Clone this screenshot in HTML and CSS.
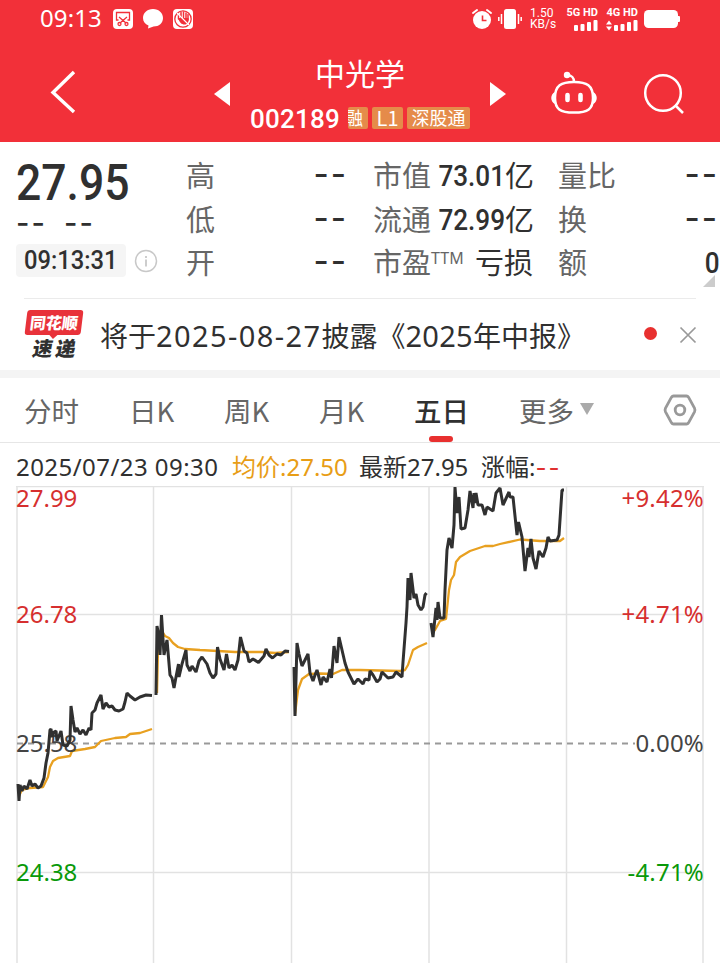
FILE: index.html
```html
<!DOCTYPE html>
<html lang="zh-CN">
<head>
  <meta charset="UTF-8" />
  <meta name="viewport" content="width=device-width, initial-scale=1.0" />
  <title>中光学 002189</title>
  <link rel="stylesheet" href="styles.css">
</head>
<body>
<header class="top">
  <div class="status">
    <span class="clock">09:13</span>
    <svg class="status-left" width="82" height="22" viewBox="112 7 82 22">
      <rect x="113" y="8" width="20" height="20" rx="4" fill="#fff"/>
      <g fill="none" stroke="#f23039" stroke-width="1.3">
        <path d="M118.500 19h-2v-7.500h13v7.500h-2M119 16l7 6M127 16l-7 6"/>
        <circle cx="119.500" cy="23" r="1.500"/><circle cx="126.500" cy="23" r="1.500"/>
      </g>
      <path d="M153 8c6 0 10 4 10 9s-4 8.500-9.500 8.500L148 27.500l.5-3c-3.500-1.500-5.500-4-5.500-7.500 0-5 4-9 10-9z" fill="#fff"/>
      <rect x="173" y="8" width="20" height="20" rx="4" fill="#fff"/>
      <circle cx="183" cy="18" r="8.200" fill="none" stroke="#f23039" stroke-width="1.300"/>
      <path d="M178.500 18v-4.500M181 17v-5.500M183.500 17v-6M186 17v-5M188 19v-5.500" stroke="#f23039" stroke-width="1.500" stroke-linecap="round"/>
      <path d="M178 17h10.500c.5 4-1 6.500-4 6.500s-5-2-6.500-6.500z" fill="#f23039"/>
      <path d="M177 12l12 12" stroke="#fff" stroke-width="1.100"/>
    </svg>
    <svg class="status-mid" width="52" height="24" viewBox="471 6 52 24">
      <circle cx="482" cy="19" r="9" fill="#fff"/>
      <path d="M473 12l4-3M491 12l-4-3" stroke="#fff" stroke-width="2" stroke-linecap="round"/>
      <path d="M482.500 14.500v5h4" fill="none" stroke="#f23039" stroke-width="1.600"/>
      <rect x="504" y="8" width="12" height="20" rx="2.500" fill="#fff"/>
      <path d="M501.500 13v10M498.800 16v4M518.500 13v10M521.200 16v4" stroke="#fff" stroke-width="1.500"/>
    </svg>
    <span class="speed">1.50<br>KB/s</span>
    <div class="sim">
      <span>5G HD</span>
      <svg width="24" height="11" viewBox="0 0 24 11" fill="#fff">
        <rect x="0" y="5" width="4" height="6" rx="1"/><rect x="6.500" y="4" width="4" height="7" rx="1"/><rect x="13" y="2" width="4" height="9" rx="1"/><rect x="19.500" y="0" width="4" height="11" rx="1"/>
      </svg>
    </div>
    <div class="sim">
      <span>4G HD</span>
      <svg width="32" height="11" viewBox="0 0 32 11" fill="#fff">
        <path d="M0 4.500L3 .5l3 4zM0 6.500l3 4 3-4z"/>
        <rect x="8" y="5" width="4" height="6" rx="1"/><rect x="14.500" y="4" width="4" height="7" rx="1"/><rect x="21" y="2" width="4" height="9" rx="1"/><rect x="27.500" y="0" width="4" height="11" rx="1"/>
      </svg>
    </div>
    <svg class="battery" width="36" height="18" viewBox="0 0 36 18" fill="#fff">
      <rect width="34" height="18" rx="4.500"/><rect x="33" y="6" width="3" height="6" rx="1"/>
    </svg>
  </div>
  <div class="nav">
    <svg class="back" width="30" height="46" viewBox="0 0 30 46"><path d="M26 3L5 23.500 26 43" fill="none" stroke="#fff" stroke-width="3.400"/></svg>
    <svg class="prev" width="16" height="24" viewBox="0 0 16 24"><path d="M16 0v24L0 12z" fill="#fff"/></svg>
    <div class="stock">
      <h1>中光学</h1>
      <div class="code-row">
        <span class="code">002189</span>
        <span class="tag tag-cut">融</span>
        <span class="tag tag-l1">L1</span>
        <span class="tag tag-sgt">深股通</span>
      </div>
    </div>
    <svg class="next" width="16" height="24" viewBox="0 0 16 24"><path d="M0 0v24L16 12z" fill="#fff"/></svg>
    <svg class="robot" width="48" height="44" viewBox="550 71 48 44">
      <g fill="none" stroke="#fff" stroke-width="2.500">
        <path d="M574 82c13 0 19 3.500 19 16 0 11-5 14.500-19 14.500S555 109 555 98c0-12.500 6-16 19-16z"/>
        <path d="M574 82c0-5-2-6.500-7-7"/>
      </g>
      <circle cx="567" cy="75" r="3.200" fill="#fff"/>
      <path d="M555 92c-5 2-5 10 0 12zM593 92c5 2 5 10 0 12z" fill="#fff"/>
      <path d="M567.500 95v5M580.500 95v5" stroke="#fff" stroke-width="4.600" stroke-linecap="round"/>
    </svg>
    <svg class="search" width="42" height="42" viewBox="643 73 42 42" fill="none" stroke="#fff" stroke-width="2.500">
      <circle cx="663" cy="93" r="17.800"/><path d="M675 105l8 8"/>
    </svg>
  </div>
</header>

<section class="quote">
  <div class="price-box">
    <div class="price"><span>27.95</span></div>
    <div class="change"><span>--</span><span>--</span></div>
    <div class="time-row">
      <span class="time"><span>09:13:31</span></span>
      <svg width="24" height="24" viewBox="0 0 24 24"><circle cx="12" cy="12" r="10.500" fill="none" stroke="#c8c8c8" stroke-width="1.500"/><path d="M12 7v2M12 10.500v7" stroke="#c8c8c8" stroke-width="1.800"/></svg>
    </div>
  </div>
  <dl class="stats stats-a">
    <div><dt>高</dt><dd class="dash">--</dd></div>
    <div><dt>低</dt><dd class="dash">--</dd></div>
    <div><dt>开</dt><dd class="dash">--</dd></div>
  </dl>
  <dl class="stats stats-b">
    <div><dt>市值</dt><dd><b>73.01</b>亿</dd></div>
    <div><dt>流通</dt><dd><b>72.99</b>亿</dd></div>
    <div><dt>市盈<sup>TTM</sup></dt><dd>亏损</dd></div>
  </dl>
  <dl class="stats stats-c">
    <div><dt>量比</dt><dd class="dash">--</dd></div>
    <div><dt>换</dt><dd class="dash">--</dd></div>
    <div><dt>额</dt><dd><b>0</b></dd></div>
  </dl>
  <i class="corner"></i>
</section>

<section class="news">
  <div class="logo">
    <span class="logo-top">同花顺</span>
    <span class="logo-bottom">速递</span>
  </div>
  <p>将于<span class="num date">2025-08-27</span>披露《<span class="num">2025</span>年中报》</p>
  <i class="dot"></i>
  <svg width="18" height="18" viewBox="0 0 18 18"><path d="M1.500 1.500l15 15M16.500 1.500l-15 15" stroke="#999" stroke-width="1.700"/></svg>
</section>

<nav class="tabs">
  <span>分时</span>
  <span>日K</span>
  <span>周K</span>
  <span>月K</span>
  <span class="active">五日</span>
  <span class="more">更多<i></i></span>
  <svg width="34" height="34" viewBox="0 0 34 34" fill="none" stroke="#999" stroke-width="2.800">
    <path d="M10.500 3h13c1 0 1.500.4 2 1.200l6 11c.6 1.200.6 2.400 0 3.600l-6 11c-.5.800-1 1.200-2 1.200h-13c-1 0-1.500-.4-2-1.200l-6-11c-.6-1.200-.6-2.400 0-3.600l6-11c.5-.8 1-1.200 2-1.200z"/>
    <circle cx="17" cy="17" r="4.800"/>
  </svg>
</nav>

<div class="legend">
  <span class="l-date">2025/07/23 09:30</span>
  <span class="l-avg">均价:27.50</span>
  <span class="l-last">最新27.95</span>
  <span class="l-rate">涨幅:<em>--</em></span>
</div>

<svg class="chart" width="720" height="477" viewBox="0 486 720 477">
  <g class="grid">
    <path d="M16 486.500H704M17 614.500H703M17 872.500H703"/>
    <path d="M17 486V963M153.500 486V963M291.500 486V963M429 486V963M566.500 486V963M703 486V963"/>
  </g>
  <path class="zero" d="M17 743.500H635"/>

  <g class="avg">
    <polyline points="19,796 22,790 30,788 43,787 48,777 50,767 53,761 58,758 70,756 72,751 85,749 95,747 101,741 115,738 126,737 130,734 140,733 152,729"/>
    <polyline points="157,693 158,650 161,630 165,636 169,638 173,643 178,647 185,649 200,650 218,651 235,652 262,652 275,653 289,652"/>
    <polyline points="295,714 298,690 302,679 309,674 320,673.500 333,674 342,670 360,670 400,671 405,670 408,665 413,650 418,647 427,643"/>
    <polyline points="432,633 435,630 440,621 446,619 449,590 451,580 454,575 456,562 460,557 470,551 485,546 493,546 500,544 520,539.500 540,541 560,541 564,538"/>
  </g>

  <g class="labels">
    <text class="up" x="16" y="507">27.99</text>
    <text class="up" x="16" y="623">26.78</text>
    <text x="16" y="752">25.58</text>
    <text class="down" x="16" y="881">24.38</text>
    <text class="up end" x="704" y="507">+9.42%</text>
    <text class="up end" x="704" y="623">+4.71%</text>
    <text class="end" x="704" y="752">0.00%</text>
    <text class="down end" x="704" y="881">-4.71%</text>
  </g>

  <g class="line">
    <polyline points="18,784 19,801 20,785 22,791 24,786 27,789 30,780 32,786 35,784 38,788 41,786 44,778 46,763 48,753 50,730 51,729 52,737 54,732 56,731 57,741 59,736 61,731 63,745 67,746 70,740 71,706 73,720 75,732 77,728 80,734 83,730 86,735 89,728 91,730 92,713 95,710 97,703 101,695 103,709 106,703 109,707 112,706 115,710 119,711 123,709 125,702 127,693 130,696 135,700 140,697 146,695 152,695.500"/>
    <polyline points="156,695 157,626 159,637 160,655 161.500,615 164,655 167,640 170,675 172,678 174,688 176,677 178.500,664 179,677 182,664 186,650 187,665 190,671 192,666 196,672 199,661 202,657 207,664 210,673 213,678 216,674 217.500,647 220,659 224,670 226.500,654 229,668 232,665 235,670 238,660 240.500,637 244,651 247,653 249,662 253,659 258.500,662.500 264,656 266,649 269,655 272.500,658 277,654 281,655 285,651 289,651.500"/>
    <polyline points="294,667 295,716 297,643 299,654 302,666 305,660 308,654 310,673 313,681 315,675 317,670 321,685 323,677 327,682 330,669 331.500,678 334,646 337,663 339,637 342,650 345,663 348,672 354,684 358,679 363,684 365,679 369,680 370,671 373,675 377,682 380,679 382,672 388,678 393,677 396,672 402,677 403,662 406,623 407,607 408,578 410,600 411,573 414,598 416,594 418,605 421,610 423,607 425,595 426.500,593"/>
    <polyline points="431,623 433,637 436,608 437,620 438,602 440,618 444,618 445,590 447,550 449,538 452,548 454,525 455,487 457,513 459,497 461,529 465,528 468,510 470,491 473,508 474,493 475,503 476,493 478,505 482,505 485,515 487,507 493,511 496,493 500,488 503,505 509,492 510,497 513,497 517,535 518.500,522 522,537 525,571 528,548 529,557 531,539 533,558 536,569 539,551 543,557 546,548 548,537 550,541 557,540 559,535 562,490 564,490"/>
  </g>
</svg>
</body>
</html>
```
FILE: styles.css
```css
* {
  box-sizing: border-box;
}
body {
  margin: 0;
  width: 720px;
  height: 963px;
  overflow: hidden;
  background: #fff;
  color: #303030;
  font-family: "Noto Sans", "Noto Sans CJK SC", sans-serif;
}
svg {
  display: block;
  flex: none;
}
i, em {
  font-style: normal;
}

/* red header */
.top {
  height: 142px;
  background: #f23039;
  color: #fff;
}
.status {
  display: flex;
  height: 37px;
  align-items: center;
  padding-left: 40px;
}
.clock {
  width: 72px;
  font-size: 24px;
  line-height: 34px;
  letter-spacing: 0.1px;
  margin-top: -2px;
}
.status-left {
  margin-right: 277px;
}
.speed {
  width: 42px;
  padding-left: 7px;
  font: 400 12px/11px Roboto, sans-serif;
}
.sim {
  width: 40px;
  display: flex;
  flex-direction: column;
  align-items: flex-end;
  padding-right: 7px;
  font: 700 11px/12px Roboto, sans-serif;
  white-space: nowrap;
}
.sim svg {
  margin-top: 1px;
}
.battery {
  margin-left: -1px;
}
.nav {
  display: flex;
  height: 105px;
}
.back {
  margin: 32px 0 0 48px;
}
.prev {
  margin: 45px 0 0 136px;
}
.stock {
  width: 260px;
  padding-left: 20px;
}
.stock h1 {
  width: 220px;
  margin: 15px 0 0;
  font: 400 30px/40px "Noto Sans CJK SC", sans-serif;
  text-align: center;
}
.code-row {
  display: flex;
  height: 22px;
  margin-top: 15px;
  align-items: center;
}
.code {
  width: 98px;
  font: 500 26px/24px Roboto, sans-serif;
  letter-spacing: 0.2px;
  padding-top: 1px;
}
.tag {
  height: 22px;
  margin-right: 4px;
  background: #e58b4a;
  border-radius: 2px;
  font: 400 18px/21px "Noto Sans CJK SC", sans-serif;
  text-align: center;
  white-space: nowrap;
}
.tag-cut {
  display: flex;
  width: 20px;
  justify-content: flex-end;
  padding-right: 5px;
  overflow: hidden;
}
.tag-l1 {
  width: 31px;
  font-size: 20px;
}
.tag-sgt {
  width: 63px;
  margin-right: 0;
}
.next {
  margin: 45px 0 0 0;
}
.robot {
  margin: 34px 0 0 44px;
}
.search {
  margin: 36px 0 0 45px;
}

/* quote */
.quote {
  position: relative;
  display: flex;
  height: 157px;
  padding: 11px 0 0 16px;
}
.quote::after {
  content: "";
  position: absolute;
  left: 24px;
  right: 24px;
  bottom: 0;
  height: 1px;
  background: #ebebeb;
}
.price-box {
  width: 170px;
}
.price {
  height: 61px;
  font: 500 50px/60px Roboto, sans-serif;
}
.price span {
  display: inline-block;
  transform: scaleX(0.89);
  transform-origin: left;
}
.change {
  display: flex;
  height: 18px;
  gap: 17px;
  font: 500 29px/18px Inter, sans-serif;
}
.change span {
  width: 31px;
  letter-spacing: 2px;
  white-space: nowrap;
}
.time-row {
  display: flex;
  align-items: center;
  gap: 8px;
  margin-top: 12px;
}
.time {
  width: 110px;
  height: 33px;
  padding-left: 8px;
  background: #f5f5f5;
  border-radius: 4px;
  font: 500 25px/33px Roboto, sans-serif;
}
.time span {
  display: inline-block;
  transform: scaleX(0.95);
  transform-origin: left;
}
.stats {
  margin: 0;
  flex: none;
}
.stats div {
  display: flex;
  height: 43.500px;
  justify-content: space-between;
  font: 400 29px/42px "Noto Sans CJK SC", sans-serif;
  white-space: nowrap;
}
.stats dt {
  color: #666;
}
.stats dd {
  margin: 0;
}
.stats b {
  display: inline-block;
  font: 500 29px/40px Roboto, sans-serif;
  transform: translateY(-1px) scaleX(0.9);
  transform-origin: right;
}
.stats sup {
  font: 400 16px/10px "Noto Sans", sans-serif;
  vertical-align: 10px;
}
.stats .dash {
  font-family: Inter, sans-serif;
  font-size: 33px;
  font-weight: 500;
  letter-spacing: 2px;
}
.stats-a {
  width: 162px;
  margin-right: 25px;
}
.stats-b {
  width: 160px;
  margin-right: 25px;
}
.stats-c {
  width: 161px;
}
.corner {
  position: absolute;
  right: 5px;
  bottom: 12px;
  width: 12px;
  height: 12px;
  background: #ccc;
  clip-path: polygon(100% 0, 100% 100%, 0 100%);
}

/* news strip */
.news {
  display: flex;
  height: 79px;
  align-items: center;
  padding: 1px 0 0 24px;
  border-bottom: 8px solid #f4f4f4;
}
.logo {
  display: flex;
  flex-direction: column;
  align-items: center;
  width: 60px;
  margin-right: 16px;
  font-family: "Noto Sans CJK SC", sans-serif;
  font-weight: 900;
}
.logo-top {
  position: relative;
  width: 56px;
  height: 25px;
  background: #e8323a;
  border-radius: 3px;
  transform: skewX(-7deg);
  color: #fff;
  font-size: 16px;
  line-height: 24px;
  text-align: center;
}
.logo-top::after {
  content: "";
  position: absolute;
  left: 24px;
  top: 24px;
  border: 5px solid transparent;
  border-top-color: #e8323a;
}
.logo-bottom {
  margin-left: 3px;
  font-size: 20px;
  line-height: 25px;
  letter-spacing: 3px;
  transform: skewX(-10deg);
}
.news p {
  width: 544px;
  margin: 0;
  font: 400 28px/40px "Noto Sans CJK SC", sans-serif;
  white-space: nowrap;
}
.news .num {
  font-family: "Noto Sans", sans-serif;
  font-size: 29px;
  letter-spacing: 0.3px;
}
.news .date {
  letter-spacing: 1.4px;
}
.dot {
  width: 13px;
  height: 13px;
  margin: -3px 22px 0 0;
  border-radius: 50%;
  background: #e8302f;
}

/* tabs */
.tabs {
  display: flex;
  height: 65px;
  align-items: center;
  padding-left: 24px;
  border-bottom: 1px solid #e6e6e6;
  color: #666;
  font: 400 27.500px/64px "Noto Sans CJK SC", sans-serif;
}
.tabs span {
  width: 95px;
  white-space: nowrap;
}
.tabs span:first-child {
  width: 105px;
}
.tabs .active {
  position: relative;
  width: 105px;
  color: #303030;
  font-weight: 500;
}
.tabs .active::after {
  content: "";
  position: absolute;
  left: 15px;
  bottom: 0;
  width: 24px;
  height: 6px;
  border-radius: 3px;
  background: #e8302f;
}
.tabs .more {
  display: flex;
  width: 144px;
  align-items: center;
}
.more i {
  margin: -2px 0 0 6px;
  border: 7.500px solid transparent;
  border-top: 12px solid #aaa;
  border-bottom: 0;
}

/* chart */
.legend {
  display: flex;
  height: 43px;
  padding-left: 16px;
  font-size: 24px;
  line-height: 47px;
  white-space: nowrap;
}
.l-date {
  width: 216px;
  letter-spacing: 0.45px;
}
.l-avg {
  width: 127px;
  color: #e89d16;
}
.l-last {
  width: 122px;
}
.legend em {
  color: #e03030;
  font-family: Inter, sans-serif;
  letter-spacing: 2px;
}
.grid {
  fill: none;
  stroke: #e2e2e2;
  stroke-width: 1.500;
}
.zero {
  stroke: #999;
  stroke-width: 2;
  stroke-dasharray: 6 5;
}
.line, .avg {
  fill: none;
  stroke: #303030;
  stroke-width: 3;
  stroke-linejoin: bevel;
}
.avg {
  stroke: #e8a020;
  stroke-width: 2.300;
}
.labels {
  fill: #444;
  font-size: 24px;
}
.up {
  fill: #d62f2f;
}
.down {
  fill: #0a990a;
}
.end {
  text-anchor: end;
  letter-spacing: 0.2px;
}
```
